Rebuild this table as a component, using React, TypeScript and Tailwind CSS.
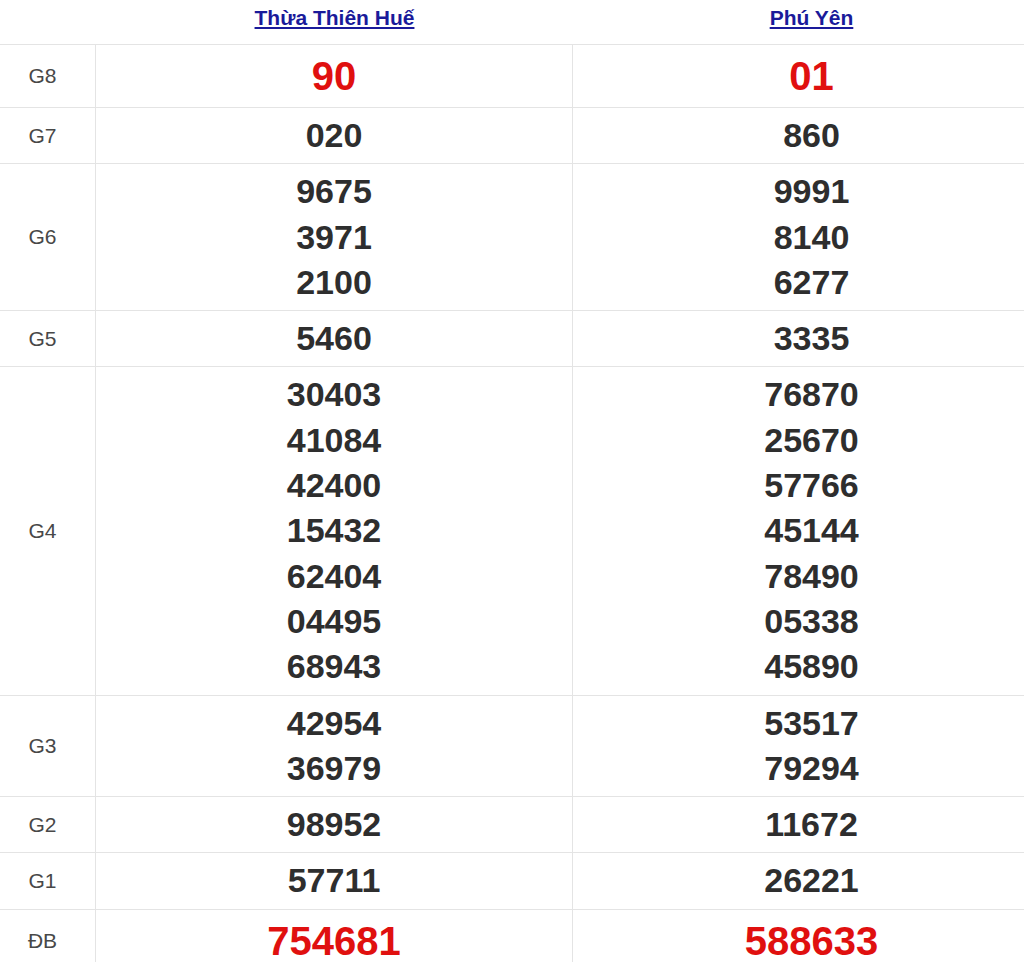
import React from "react";

type Row = { label: string; a: string[]; b: string[]; red?: boolean };

const rows: Row[] = [
  { label: "G8", a: ["90"], b: ["01"], red: true },
  { label: "G7", a: ["020"], b: ["860"] },
  { label: "G6", a: ["9675", "3971", "2100"], b: ["9991", "8140", "6277"] },
  { label: "G5", a: ["5460"], b: ["3335"] },
  {
    label: "G4",
    a: ["30403", "41084", "42400", "15432", "62404", "04495", "68943"],
    b: ["76870", "25670", "57766", "45144", "78490", "05338", "45890"],
  },
  { label: "G3", a: ["42954", "36979"], b: ["53517", "79294"] },
  { label: "G2", a: ["98952"], b: ["11672"] },
  { label: "G1", a: ["57711"], b: ["26221"] },
  { label: "ĐB", a: ["754681"], b: ["588633"], red: true },
];

function Cell({ nums, red }: { nums: string[]; red?: boolean }) {
  return (
    <div className="flex flex-col items-center justify-center py-[5px]">
      {nums.map((n, i) => (
        <div
          key={i}
          className={
            red
              ? "text-[40px] leading-[52px] font-bold text-[#e0100f]"
              : "text-[34px] leading-[45.3px] font-bold text-[#2e2e2e]"
          }
        >
          {n}
        </div>
      ))}
    </div>
  );
}

export default function App() {
  return (
    <div
      className="w-[1024px] h-[962px] overflow-hidden bg-white"
      style={{ fontFamily: '"Liberation Sans", Arial, sans-serif' }}
    >
      <div className="w-[1050px]">
        <div className="grid grid-cols-[96px_477px_477px] h-[45px] border-b border-[#e4e4e4]">
          <div />
          <div className="flex items-center justify-center pb-[8px]">
            <a href="#" className="text-[21px] font-bold text-[#1a1a9a] underline">
              Thừa Thiên Huế
            </a>
          </div>
          <div className="flex items-center justify-center pb-[8px]">
            <a href="#" className="text-[21px] font-bold text-[#1a1a9a] underline">
              Phú Yên
            </a>
          </div>
        </div>
        {rows.map((r) => (
          <div
            key={r.label}
            className="grid grid-cols-[96px_477px_477px] border-b border-[#e4e4e4]"
          >
            <div className="flex items-center justify-center pr-[10px] border-r border-[#e4e4e4] text-[21px] text-[#484848]">
              {r.label}
            </div>
            <div className="border-r border-[#e4e4e4]">
              <Cell nums={r.a} red={r.red} />
            </div>
            <div>
              <Cell nums={r.b} red={r.red} />
            </div>
          </div>
        ))}
      </div>
    </div>
  );
}
